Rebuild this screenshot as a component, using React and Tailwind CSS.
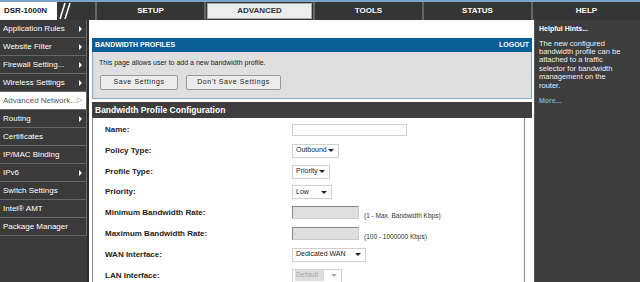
import React from 'react';

const menu = [
  { label: 'Application Rules', arrow: true },
  { label: 'Website Filter', arrow: true },
  { label: 'Firewall Setting...', arrow: true },
  { label: 'Wireless Settings', arrow: true },
  { label: 'Advanced Network...', arrow: true, active: true },
  { label: 'Routing', arrow: true },
  { label: 'Certificates' },
  { label: 'IP/MAC Binding' },
  { label: 'IPv6', arrow: true },
  { label: 'Switch Settings' },
  { label: 'Intel® AMT' },
  { label: 'Package Manager' },
];

const tabs = ['SETUP', 'ADVANCED', 'TOOLS', 'STATUS', 'HELP'];

const hints = ['The new configured', 'bandwidth profile can be', 'attached to a traffic', 'selector for bandwidth', 'management on the', 'router.'];

function Caret({ className = 'border-t-[#222]' }) {
  return <span className={`inline-block w-0 h-0 border-l-[3px] border-r-[3px] border-t-[3px] border-l-transparent border-r-transparent ${className}`} />;
}

function Select({ value, width, disabled }) {
  return (
    <div
      className={`h-[14px] flex items-center justify-between border border-[#cfcfcf] pl-[3px] pr-[4px] text-[7px] ${disabled ? 'text-[#aaa]' : 'text-[#222]'}`}
      style={{ width }}
    >
      <span className={disabled ? 'bg-[#ddd] px-[1px] -ml-[1px] pr-[6px]' : ''}>{value}</span>
      <Caret className={disabled ? 'border-t-[#aaa]' : 'border-t-[#222]'} />
    </div>
  );
}

function Row({ label, h = 'h-[21px]', children }) {
  return (
    <div className={`flex items-center ${h}`}>
      <div className="w-[199px] pl-[12px] text-[8px] font-bold text-[#222]">{label}</div>
      <div className="flex items-center">{children}</div>
    </div>
  );
}

function Rate({ hint }) {
  return (
    <>
      <div className="w-[67px] h-[13px] bg-[#dedede] border-t border-l border-[#888] border-r border-b border-r-[#ccc] border-b-[#ccc]" />
      <span className="ml-[5px] mt-[6px] text-[6.5px] text-[#333]">{hint}</span>
    </>
  );
}

export default function App() {
  return (
    <div className="w-[640px] h-[282px] overflow-hidden bg-white flex flex-col" style={{ fontFamily: '"Liberation Sans", Arial, sans-serif' }}>
      {/* top nav */}
      <div className="h-[20px] bg-[#353535] border-t-2 border-[#7aa4c8] flex">
        <div className="w-[95px] flex items-stretch">
          <div className="w-[57px] bg-white flex items-center pl-[4px] text-[8px] font-bold text-[#222]">DSR-1000N</div>
          <svg width="18" height="18" viewBox="0 0 18 18">
            <line x1="3" y1="17" x2="8" y2="1" stroke="#fff" strokeWidth="1.6" />
            <line x1="8" y1="17" x2="13" y2="1" stroke="#fff" strokeWidth="1.6" />
          </svg>
        </div>
        {tabs.map((t) => (
          <div key={t} className="flex-1 border-l-2 border-[#666] flex">
            {t === 'ADVANCED' ? (
              <div className="flex-1 my-[1px] mx-[1px] bg-[#ededed] border border-[#aaa] flex items-center justify-center text-[8px] font-bold text-[#333]">{t}</div>
            ) : (
              <div className="flex-1 flex items-center justify-center text-[8px] font-bold text-white">{t}</div>
            )}
          </div>
        ))}
      </div>

      <div className="flex flex-1">
        {/* sidebar */}
        <div className="w-[89px] bg-[#3a3a3a] border-r-2 border-[#2e2e2e]">
          {menu.map((m) => (
            <div
              key={m.label}
              className={`h-[18px] flex items-center justify-between pl-[3px] pr-[4px] border-b border-r border-[#686868] text-[8px] ${m.active ? 'bg-white text-[#555]' : 'text-white'}`}
            >
              <span>{m.label}</span>
              {m.arrow && (
                m.active ? (
                  <span className="text-[7px] text-[#777]">▷</span>
                ) : (
                  <span className="inline-block w-0 h-0 border-t-[3px] border-b-[3px] border-l-[3px] border-t-transparent border-b-transparent border-l-white" />
                )
              )}
            </div>
          ))}
        </div>

        {/* main */}
        <div className="w-[445px] pl-[3px] pr-[2px] pt-[18px] flex flex-col">
          <div className="h-[14px] bg-[#0b5f98] flex items-center justify-between px-[3px] text-[7px] font-bold text-white">
            <span>BANDWIDTH PROFILES</span>
            <span>LOGOUT</span>
          </div>
          <div className="h-[47px] bg-[#dfdfdf] border border-t-0 border-[#7fa8cc] pl-[6px] pt-[6px]">
            <div className="text-[7px] text-[#222]">This page allows user to add a new bandwidth profile.</div>
            <div className="flex gap-[8px] mt-[6px] pl-[1px]">
              <div className="w-[78px] h-[15px] rounded-[2px] border border-[#999] bg-[#ececec] flex items-center justify-center text-[7px] tracking-[0.6px] text-[#222]">Save Settings</div>
              <div className="w-[95px] h-[15px] rounded-[2px] border border-[#999] bg-[#ececec] flex items-center justify-center text-[7px] tracking-[0.6px] text-[#222]">Don't Save Settings</div>
            </div>
          </div>

          <div className="mt-[3px] h-[16px] bg-[#3e3e3e] flex items-center px-[3px] text-[8.5px] font-bold text-white">Bandwidth Profile Configuration</div>
          <div className="flex-1 mr-[7px] border-l border-r border-[#8a8a8a] pt-[1px]">
            <Row label="Name:">
              <div className="w-[115px] h-[12px] border border-[#cfcfcf]" />
            </Row>
            <Row label="Policy Type:">
              <Select value="Outbound" width={47} />
            </Row>
            <Row label="Profile Type:">
              <Select value="Priority" width={38} />
            </Row>
            <Row label="Priority:" h="h-[20px]">
              <Select value="Low" width={40} />
            </Row>
            <Row label="Minimum Bandwidth Rate:">
              <Rate hint="(1 - Max. Bandwidth Kbps)" />
            </Row>
            <Row label="Maximum Bandwidth Rate:">
              <Rate hint="(100 - 1000000 Kbps)" />
            </Row>
            <Row label="WAN Interface:">
              <Select value="Dedicated WAN" width={74} />
            </Row>
            <Row label="LAN Interface:">
              <Select value="Default" width={50} disabled />
            </Row>
          </div>
        </div>

        {/* help */}
        <div className="flex-1 bg-[#3d3d3d] border-l border-[#555] pl-[4px] pt-[4px] text-white">
          <div className="text-[7px] font-bold">Helpful Hints...</div>
          <div className="mt-[5px] text-[7.5px] leading-[8.4px] text-[#eee]">
            {hints.map((l) => (
              <div key={l}>{l}</div>
            ))}
          </div>
          <div className="mt-[6px] text-[7px] font-bold text-[#7aa3d6]">More...</div>
        </div>
      </div>
    </div>
  );
}
